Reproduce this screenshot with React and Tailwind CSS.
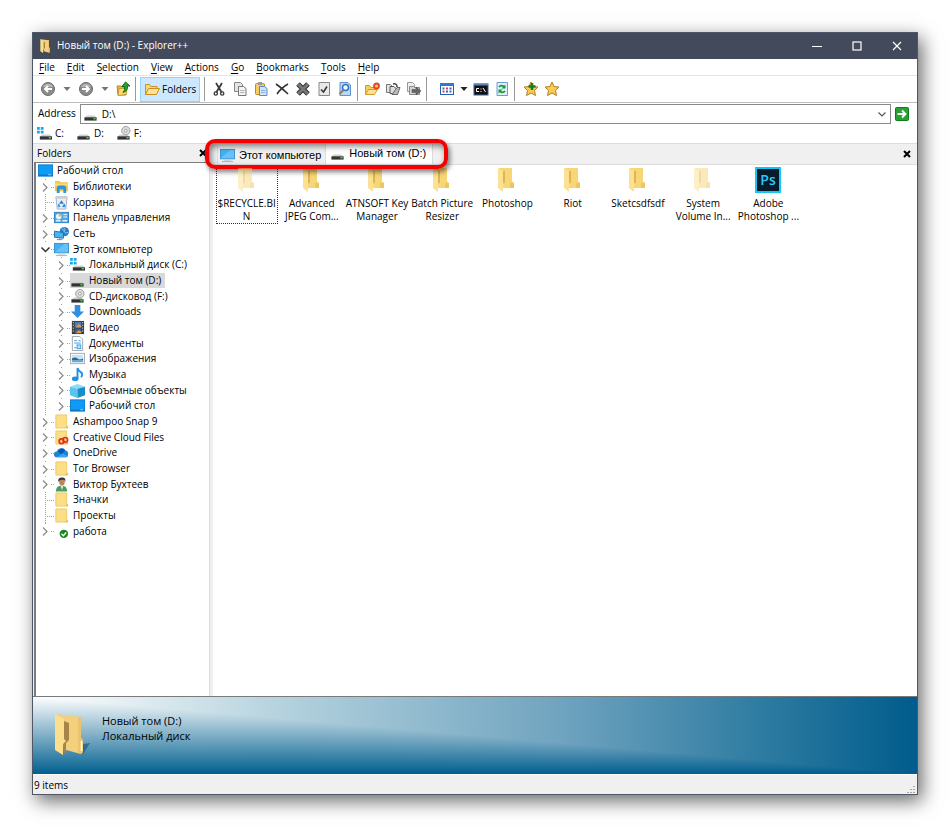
import { useState } from "react";

const Svg = ({ size = "size-4", box = "0 0 16 16", children }) => (
	<svg viewBox={box} className={`${size} shrink-0`} fill="none" aria-hidden="true">
		{children}
	</svg>
);

/* tree and drive icons */

const DesktopIcon = () => (
	<Svg size="size-[15px]">
		<rect x="0.5" y="2" width="15" height="12" fill="#0f9bf5" stroke="#0a7fd0" />
		<path d="M1 13h14" stroke="#0a6dba" />
		<path d="M11 12.5h3" stroke="#9fd8ff" />
	</Svg>
);

const LibraryIcon = () => (
	<Svg size="size-[15px]">
		<path d="M1 2h5l1.500 1.500H15V13H1z" fill="#f5c84b" />
		<path d="M1 5h14v2H1z" fill="#fadb7c" />
		<path d="M3 15V9.500Q3 7 5.500 7h5Q13 7 13 9.500V15h-3v-4H6v4z" fill="#2f95dc" />
	</Svg>
);

const RecycleIcon = () => (
	<Svg size="size-[15px]">
		<path d="M2 2h12l-1.500 13h-9z" fill="#e9eef2" stroke="#a5adb5" />
		<path d="M2 2h12v2H2z" fill="#c9d0d6" />
		<path d="M8 6l2 3H6zM5 9.500l1.500 3H4.500zM11 9.500l1 3H9z" fill="#1f7fd6" stroke="#1f7fd6" strokeWidth="0.600" />
	</Svg>
);

const PanelIcon = () => (
	<Svg size="size-[15px]">
		<rect x="0.500" y="2.500" width="15" height="11" fill="#4aa8e8" stroke="#2b82c4" />
		<circle cx="5" cy="7" r="3" fill="#e9f6ff" />
		<path d="M5 7V4a3 3 0 0 1 3 3z" fill="#f0b43c" />
		<path d="M10 5h4M10 7.500h4" stroke="#fff" />
		<path d="M2 11.500h5M9 11.500h5" stroke="#dff1ff" strokeWidth="1.500" />
	</Svg>
);

const NetworkIcon = () => (
	<Svg size="size-[15px]">
		<circle cx="11" cy="6" r="5" fill="#2a7fc4" />
		<path d="M8 3q3 1 3 3t4 1M10 1q3 3 1 5" stroke="#8cc9ef" />
		<path d="M0.500 5.500L10 7v6L0.500 12z" fill="#4bb3f2" stroke="#1d6faa" />
		<path d="M3 14.500h6M6 13v2" stroke="#6f8799" />
	</Svg>
);

const ComputerIcon = () => (
	<Svg size="size-[15px]">
		<rect x="0.500" y="1.500" width="15" height="10" fill="#44b0f3" stroke="#3b8fc9" />
		<path d="M1 11L11 2h4v9z" fill="#67c2f8" />
		<path d="M2 14.500h12" stroke="#9fb1bf" />
		<path d="M4 13h8" stroke="#b9c7d1" />
	</Svg>
);

const diskBody = (
	<>
		<path d="M4 9h8l2.500 2.500h-13z" fill="#cfcfcf" />
		<path d="M1.500 11h13v3.500h-13z" fill="#333" />
		<path d="M11 12.500h2.500" stroke="#4ecb52" strokeWidth="1.500" />
	</>
);

const DiskIcon = () => <Svg size="size-[15px]">{diskBody}</Svg>;

const SystemDiskIcon = () => (
	<Svg size="size-[15px]">
		<g transform="translate(1.500 0)">{diskBody}</g>
		<path d="M0 1h3v3H0zM4 1h3v3H4zM0 5h3v3H0zM4 5h3v3H4z" fill="#19a8ea" />
	</Svg>
);

const CdIcon = () => (
	<Svg size="size-[15px]">
		{diskBody}
		<circle cx="10.500" cy="5" r="4.500" fill="#dcdcdc" stroke="#9b9b9b" />
		<circle cx="10.500" cy="5" r="1.500" fill="#fff" stroke="#9b9b9b" />
	</Svg>
);

const DownloadIcon = () => (
	<Svg size="size-[15px]">
		<path d="M5 1h6v7h4l-7 7-7-7h4z" fill="#2f8fe0" />
	</Svg>
);

const VideoIcon = () => (
	<Svg size="size-[15px]">
		<rect x="2" y="1" width="13" height="14" fill="#3a3a3a" />
		<path d="M3.500 2v12M13.500 2v12" stroke="#d0d0d0" strokeDasharray="1.500 1.500" />
		<rect x="5" y="2" width="7" height="6" fill="#3f7fc6" />
		<rect x="5" y="9" width="7" height="5" fill="#345f9c" />
		<path d="M6 8l3-4 3 2v2zM6 14l3-3 3 1v2z" fill="#d99a4a" />
	</Svg>
);

const DocIcon = () => (
	<Svg size="size-[15px]">
		<path d="M2.500 0.500h8l3 3v12h-11z" fill="#fff" stroke="#9aa5ae" />
		<path d="M4.500 5h3M4.500 7.500h7M9 5h2.500M4.500 12.500h2" stroke="#3d9be0" />
		<rect x="7.500" y="9.500" width="4" height="4" fill="#bfe0f7" stroke="#3d9be0" />
	</Svg>
);

const PictureIcon = () => (
	<Svg size="size-[15px]">
		<rect x="0.500" y="2.500" width="15" height="11" fill="#fff" stroke="#a9a9a9" />
		<rect x="2" y="4" width="12" height="8" fill="#c5e4f8" />
		<path d="M2 10V8q4-2 6 0t6 0v2z" fill="#2f6690" />
		<path d="M2 10h12v2H2z" fill="#6fa9cf" />
	</Svg>
);

const MusicIcon = () => (
	<Svg size="size-[15px]">
		<ellipse cx="5.500" cy="12.500" rx="3.500" ry="2.500" fill="#1e90e6" />
		<path d="M8 13V1q1 3 3.500 4.500T12 11" stroke="#1e90e6" strokeWidth="2" />
	</Svg>
);

const CubeIcon = () => (
	<Svg size="size-[15px]">
		<path d="M0 4l8-3 8 3-8 2z" fill="#8adcf7" />
		<path d="M0 4l8 2v10l-8-3z" fill="#5ac4ee" />
		<path d="M16 4L8 6v10l8-3z" fill="#168fc8" />
	</Svg>
);

const FolderIcon = ({ children }) => (
	<Svg size="size-[15px]">
		<path d="M2 1h11.500v12h1v2H2z" fill="#fbdf86" stroke="#ecc965" />
		<path d="M13 13.500h2V15h-3z" fill="#e3b84c" />
		{children}
	</Svg>
);

const CloudFolderIcon = () => (
	<FolderIcon>
		<circle cx="8" cy="12" r="2.500" stroke="#e0301e" strokeWidth="1.800" />
		<circle cx="12" cy="10.500" r="2.500" stroke="#e0301e" strokeWidth="1.800" />
	</FolderIcon>
);

const OneDriveIcon = () => (
	<Svg size="size-[15px]">
		<path d="M3 13a3 3 0 0 1 0-6 5 5 0 0 1 9-1.500A4 4 0 0 1 13 13z" fill="#1b84d8" />
		<path d="M4 7a5 5 0 0 1 8-1.500L8 10z" fill="#0f57ad" />
		<path d="M3 13l6-4 6 3q-1 1-2 1z" fill="#35a7ee" />
	</Svg>
);

const UserIcon = () => (
	<Svg size="size-[15px]">
		<path d="M2 15.500Q2 9 8 9t6 6.500z" fill="#4b9a5f" />
		<path d="M7 9h3l-1.500 5z" fill="#e6efe8" />
		<ellipse cx="8.500" cy="5" rx="3" ry="4" fill="#b98560" />
		<path d="M4.500 5Q4 0.500 8.500 0.500T12 5l-1-2H7z" fill="#33302e" />
	</Svg>
);

const CheckIcon = () => (
	<Svg size="size-[15px]">
		<circle cx="10.500" cy="10.500" r="4.500" fill="#15871b" />
		<path d="M8 10.500l2 2 3-3.500" stroke="#fff" strokeWidth="1.500" />
	</Svg>
);

/* standing folder used in the title bar and the details panel */
const OpenFolder = ({ size, shadow }) => (
	<Svg size={size} box="0 0 36 42">
		{shadow && <path d="M22 39l7 2 7-11-7 1z" fill="#174e77" opacity="0.6" />}
		<path d="M1 1l26 3v21l2 2v12l-2 2-15-4z" fill="#f3d07d" />
		<path d="M27 4v21l2 2v12l-2 2-3-1V4z" fill="#ecc36b" />
		<path d="M10 8l5 2v17l-3 3v8l-2 3z" fill="#a88446" />
		<path d="M1 1l9 5v20l2 2-3 3v11L1 37z" fill="#fbdf8c" />
		{shadow && <path d="M27.500 28v10" stroke="#fff" strokeWidth="1.500" />}
	</Svg>
);

const FileFolder = ({ faded }) => (
	<Svg size={faded ? "size-[26px] opacity-50" : "size-[26px]"} box="0 0 26 26">
		<path d="M5 1h13v13l2 2v5H5z" fill="#f7d678" />
		<path d="M9 4h2v11l-2 3z" fill="#e0b450" />
		<path d="M4 1l5 3v12l1 1-1 2v6l-5-4z" fill="#fce193" />
		<path d="M16 16h4v5h-4z" fill="#eec660" />
	</Svg>
);

const PhotoshopIcon = () => (
	<Svg size="size-[26px]" box="0 0 26 26">
		<rect x="1" y="1" width="24" height="24" fill="#071c2b" stroke="#16c5f7" strokeWidth="2" />
		<text x="13" y="18" textAnchor="middle" fontSize="14" fontWeight="600" fontFamily="Open Sans, sans-serif" fill="#2cc9fb">
			Ps
		</text>
	</Svg>
);

/* toolbar icons */

const roundArrow = (d) => (
	<Svg>
		<circle cx="8" cy="8" r="6.500" fill="#8b8b8b" stroke="#6c6c6c" />
		<path d="M3 6a5.500 5.500 0 0 1 10 0z" fill="#b5b5b5" />
		<path d={d} stroke="#fff" strokeWidth="1.800" />
	</Svg>
);
const BackIcon = () => roundArrow("M12 8H5M8 5L5 8l3 3");
const ForwardIcon = () => roundArrow("M4 8h7M8 5l3 3-3 3");
const UpIcon = () => (
	<Svg>
		<path d="M2 5h4l1 1h4v8H3z" fill="#e9b93d" stroke="#b98a1f" />
		<path d="M3 14.500l1-7h8l-1 6z" fill="#fbdc73" stroke="#c99a2f" />
		<path d="M7 5.500L10.500 1 15 5h-2.500q.5 5-4.500 6.500 2.500-2.500 1.500-6z" fill="#22a32a" stroke="#12701a" />
	</Svg>
);
const FoldersIcon = () => (
	<Svg>
		<path d="M1.500 13.500v-10h4l1.500 2h6v2" fill="#f9d877" stroke="#cc8f24" />
		<path d="M1.500 13.500l3-6h11l-3 6z" fill="#fde391" stroke="#cc8f24" />
	</Svg>
);
const CutIcon = () => (
	<Svg>
		<path d="M5 2l5.500 9M11 2L5.500 11" stroke="#3b3b3b" strokeWidth="1.800" />
		<circle cx="4.800" cy="12.500" r="1.600" stroke="#3b3b3b" strokeWidth="1.400" />
		<circle cx="11.200" cy="12.500" r="1.600" stroke="#3b3b3b" strokeWidth="1.400" />
	</Svg>
);
const CopyIcon = () => (
	<Svg>
		<path d="M2.500 1.500h6l2 2v7h-8z" fill="#e4e4e4" stroke="#888" />
		<path d="M6.500 5.500h5l2.500 2v7H6.500z" fill="#f4f4f4" stroke="#777" />
		<path d="M8 9.500h4.500M8 11.500h4.500" stroke="#b5b5b5" />
	</Svg>
);
const PasteIcon = () => (
	<Svg>
		<rect x="2.500" y="2.500" width="9" height="11" rx="1" fill="#f5cd63" stroke="#c08b27" />
		<path d="M5 1h4v3H5z" fill="#9c9c9c" />
		<path d="M6.500 5.500h5l2.500 2v7H6.500z" fill="#cfe3fb" stroke="#5c8bc5" />
		<path d="M8 9.500h4.500M8 11.500h4.500" stroke="#8fb3de" />
	</Svg>
);
const DeleteIcon = () => (
	<Svg>
		<path d="M2 3q6 4 12 10M14 3q-7 4-11 10" stroke="#333" strokeWidth="1.600" />
	</Svg>
);
const ShredIcon = () => (
	<Svg>
		<path d="M3 3l10 10M13 3L3 13" stroke="#333" strokeWidth="5" />
		<path d="M3 3l10 10M13 3L3 13" stroke="#777" strokeWidth="3" />
	</Svg>
);
const PropertiesIcon = () => (
	<Svg>
		<path d="M3 1.500h10.500v13H3z" fill="#e9e9e9" stroke="#888" />
		<path d="M5 8.500l2.500 2.500L11 5.500" stroke="#333" strokeWidth="1.500" />
	</Svg>
);
const SearchIcon = () => (
	<Svg>
		<path d="M3 1.500h8l2.500 2.500v10.500H3z" fill="#bcd6f5" stroke="#5f92cf" />
		<circle cx="8.500" cy="6.500" r="3" fill="#eef8ff" stroke="#2f74c5" strokeWidth="1.500" />
		<path d="M6.500 9L2.500 13" stroke="#9a7a5a" strokeWidth="2" />
	</Svg>
);
const NewFolderIcon = () => (
	<Svg>
		<path d="M1.500 13.500v-9h4l1.500 2h5v2" fill="#f7ce5e" stroke="#cf9a2f" />
		<path d="M1.500 13.500l3-5h9l-3 5z" fill="#fde391" stroke="#cf9a2f" />
		<circle cx="12.500" cy="5" r="2.500" fill="#ffd24a" stroke="#e0452a" strokeWidth="1.800" />
	</Svg>
);
const CopyToIcon = () => (
	<Svg>
		<path d="M1.500 3.500h4l2 2v6h-6z" fill="#e4e4e4" stroke="#777" />
		<path d="M5 5.500h4l2 2v5H5z" fill="#ddd" stroke="#555" />
		<path d="M8 3q4-1 4 3" stroke="#444" strokeWidth="1.500" />
		<path d="M7 13.500h5.500l2.500-7h-3z" fill="#bbb" stroke="#666" />
	</Svg>
);
const MoveToIcon = () => (
	<Svg>
		<path d="M1.500 1.500h5l2 2v7h-7z" fill="#eee" stroke="#999" />
		<path d="M3.500 13.500v-8h4l1 1h5v7z" fill="#d5d5d5" stroke="#888" />
		<path d="M6 8.500h4V6l5 4-5 4v-2.500H6z" fill="#666" stroke="#444" strokeWidth="0.500" />
	</Svg>
);
const ViewsIcon = () => (
	<Svg>
		<rect x="1.500" y="2.500" width="13" height="11" fill="#fff" stroke="#1f5fb0" />
		<path d="M1 2h14v3H1z" fill="#2f78d4" />
		<path d="M3.500 7.500h2M10.500 10.500h2" stroke="#3b6fc0" strokeWidth="2" />
		<path d="M7 7.500h2M3.500 10.500h2" stroke="#d8433a" strokeWidth="2" />
		<path d="M10.500 7.500h2M7 10.500h2" stroke="#3a5fd0" strokeWidth="2" />
	</Svg>
);
const CmdIcon = () => (
	<Svg>
		<rect x="1" y="3" width="14" height="11" fill="#111" stroke="#3e5f91" />
		<path d="M1 3.500h14" stroke="#5f82b8" strokeWidth="2" />
		<path d="M6 7.500H3.500v3H6M8 7.500v1M8 10v1M10 7l2.500 4" stroke="#fff" />
	</Svg>
);
const RefreshIcon = () => (
	<Svg>
		<path d="M3 1.500h10.500v13H3z" fill="#dfefff" stroke="#6a9bd1" />
		<path d="M5 6q2-2.500 5-.5M11 10q-2 2.500-5 .5" stroke="#189a28" strokeWidth="1.800" />
		<path d="M11.500 3.500v4h-4zM4.500 12.500v-4h4z" fill="#189a28" />
	</Svg>
);
const StarIcon = ({ plus }) => (
	<Svg>
		<path d="M8 1l2 4.500 5 .5-3.500 3.500 1 5L8 12l-4.500 2.500 1-5L1 6l5-.5z" fill="#f7cb55" stroke="#b27f22" />
		{plus && <path d="M9 2v7M5.500 5.500h7" stroke="#177d22" strokeWidth="2.500" />}
	</Svg>
);

const ToolButton = ({ label, icon: Icon }) => (
	<button aria-label={label} className="size-4">
		<Icon />
	</button>
);

const Caret = ({ label, dark }) => (
	<button aria-label={label} className="flex w-2 items-center justify-center">
		<Svg size="size-2" box="0 0 8 8">
			<path d="M0.500 2h7L4 6z" fill={dark ? "#222" : "#777"} />
		</Svg>
	</button>
);

const Separator = () => <div className="h-6 w-px bg-[#9a9a9a]" />;

const menus = ["File", "Edit", "Selection", "View", "Actions", "Go", "Bookmarks", "Tools", "Help"];

const editTools = [
	["Cut", CutIcon],
	["Copy", CopyIcon],
	["Paste", PasteIcon],
	["Delete", DeleteIcon],
	["Delete permanently", ShredIcon],
	["Properties", PropertiesIcon],
	["Search", SearchIcon],
];

const folderTools = [
	["New folder", NewFolderIcon],
	["Copy to", CopyToIcon],
	["Move to", MoveToIcon],
];

const drives = [
	["C:", SystemDiskIcon],
	["D:", DiskIcon],
	["F:", CdIcon],
];

const tree = [
	{ name: "Рабочий стол", icon: DesktopIcon, level: 0 },
	{ name: "Библиотеки", icon: LibraryIcon, level: 1, arrow: "closed" },
	{ name: "Корзина", icon: RecycleIcon, level: 1 },
	{ name: "Панель управления", icon: PanelIcon, level: 1, arrow: "closed" },
	{ name: "Сеть", icon: NetworkIcon, level: 1, arrow: "closed" },
	{ name: "Этот компьютер", icon: ComputerIcon, level: 1, arrow: "open" },
	{ name: "Локальный диск (C:)", icon: SystemDiskIcon, level: 2, arrow: "closed" },
	{ name: "Новый том (D:)", icon: DiskIcon, level: 2, arrow: "closed" },
	{ name: "CD-дисковод (F:)", icon: CdIcon, level: 2, arrow: "closed" },
	{ name: "Downloads", icon: DownloadIcon, level: 2, arrow: "closed" },
	{ name: "Видео", icon: VideoIcon, level: 2, arrow: "closed" },
	{ name: "Документы", icon: DocIcon, level: 2, arrow: "closed" },
	{ name: "Изображения", icon: PictureIcon, level: 2, arrow: "closed" },
	{ name: "Музыка", icon: MusicIcon, level: 2, arrow: "closed" },
	{ name: "Объемные объекты", icon: CubeIcon, level: 2, arrow: "closed" },
	{ name: "Рабочий стол", icon: DesktopIcon, level: 2, arrow: "closed" },
	{ name: "Ashampoo Snap 9", icon: FolderIcon, level: 1, arrow: "closed" },
	{ name: "Creative Cloud Files", icon: CloudFolderIcon, level: 1, arrow: "closed" },
	{ name: "OneDrive", icon: OneDriveIcon, level: 1, arrow: "closed" },
	{ name: "Tor Browser", icon: FolderIcon, level: 1, arrow: "closed" },
	{ name: "Виктор Бухтеев", icon: UserIcon, level: 1, arrow: "closed" },
	{ name: "Значки", icon: FolderIcon, level: 1 },
	{ name: "Проекты", icon: FolderIcon, level: 1 },
	{ name: "работа", icon: CheckIcon, level: 1, arrow: "closed" },
];

const files = [
	{ lines: ["$RECYCLE.BI", "N"], faded: true },
	{ lines: ["Advanced", "JPEG Com..."] },
	{ lines: ["ATNSOFT Key", "Manager"] },
	{ lines: ["Batch Picture", "Resizer"] },
	{ lines: ["Photoshop"] },
	{ lines: ["Riot"] },
	{ lines: ["Sketcsdfsdf"] },
	{ lines: ["System", "Volume In..."], faded: true },
	{ lines: ["Adobe", "Photoshop ..."], icon: PhotoshopIcon },
];

const Branch = ({ arrow }) => (
	<svg viewBox="0 0 18 16" className="h-4 w-[18px] shrink-0" fill="none" aria-hidden="true">
		<path d="M9.500 0v16M9 8.500h9" stroke="#a0a0a0" strokeDasharray="1 1" />
		{arrow && <rect x="5" y="2" width="9" height="13" fill="#fff" />}
		{arrow === "closed" && <path d="M7 4.500l4 4-4 4" stroke="#8c8c8c" strokeWidth="1.300" />}
		{arrow === "open" && <path d="M5.500 6.500l4 4 4-4" stroke="#333" strokeWidth="1.500" />}
	</svg>
);

const TreeRow = ({ item, selected, onSelect }) => {
	const Icon = item.icon;
	return (
		<li className="flex items-center">
			{item.level === 0 && <span className="w-0.5" />}
			{item.level === 2 && (
				<svg viewBox="0 0 16 16" className="size-4 shrink-0" aria-hidden="true">
					<path d="M9.500 0v16" stroke="#a0a0a0" strokeDasharray="1 1" />
				</svg>
			)}
			{item.level > 0 && <Branch arrow={item.arrow} />}
			<button
				onClick={onSelect}
				className={`flex h-[15px] items-center gap-1 pr-1 whitespace-nowrap ${selected ? "bg-[#d9d9d9]" : ""}`}
			>
				<Icon />
				{item.name}
			</button>
		</li>
	);
};

const CloseMark = ({ label }) => (
	<button aria-label={label} className="flex size-3 items-center justify-center">
		<Svg size="size-2" box="0 0 8 8">
			<path d="M1 1l6 6M7 1L1 7" stroke="#000" strokeWidth="2" />
		</Svg>
	</button>
);

const App = () => {
	const [selected, setSelected] = useState(7);
	const [address, setAddress] = useState("D:\\");

	return (
		<div className="flex min-h-screen flex-col bg-white p-8 font-['Open_Sans','Noto_Sans',sans-serif] text-[10px] leading-[13px] text-black">
			<div className="flex flex-1 flex-col border border-[#4d5768] bg-white shadow-[4px_6px_18px_rgba(0,0,0,0.6)]">
				<header className="flex h-[26px] items-center bg-[#434a5c] pb-px text-white">
					<div className="flex flex-1 items-center gap-1 pl-1.5">
						<OpenFolder size="size-3.5" />
						<h1>Новый том (D:) - Explorer++</h1>
					</div>
					<div className="flex">
						<button aria-label="Minimize" className="flex w-10 justify-center">
							<Svg size="size-2.5" box="0 0 10 10">
								<path d="M0 5.500h10" stroke="#fff" />
							</Svg>
						</button>
						<button aria-label="Maximize" className="flex w-10 justify-center">
							<Svg size="size-2.5" box="0 0 10 10">
								<rect x="1" y="1" width="8" height="8" stroke="#fff" strokeWidth="1.200" />
							</Svg>
						</button>
						<button aria-label="Close" className="flex w-10 justify-center">
							<Svg size="size-2.5" box="0 0 10 10">
								<path d="M1 1l8 8M9 1L1 9" stroke="#fff" strokeWidth="1.200" />
							</Svg>
						</button>
					</div>
				</header>

				<nav className="flex h-4 items-center gap-3 pl-1.5">
					{menus.map((menu) => (
						<button key={menu}>
							<span className="underline underline-offset-2">{menu[0]}</span>
							{menu.slice(1)}
						</button>
					))}
				</nav>

				<div className="flex h-[27px] items-center border-t border-[#e5e5e5] pl-[7px]">
					<div className="flex items-center gap-[7px]">
						<ToolButton label="Back" icon={BackIcon} />
						<Caret label="Back history" />
						<ToolButton label="Forward" icon={ForwardIcon} />
						<Caret label="Forward history" />
					</div>
					<div className="flex items-center gap-1 pl-1.5">
						<ToolButton label="Up" icon={UpIcon} />
						<Separator />
						<button className="flex h-[25px] items-center gap-0.5 border border-[#99d1ff] bg-[#cce8ff] px-[3px]">
							<FoldersIcon />
							Folders
						</button>
						<Separator />
					</div>
					<div className="flex items-center gap-[5px] pr-1 pl-1.5">
						{editTools.map(([label, icon]) => (
							<ToolButton key={label} label={label} icon={icon} />
						))}
					</div>
					<Separator />
					<div className="flex items-center gap-[5px] pr-1 pl-1.5">
						{folderTools.map(([label, icon]) => (
							<ToolButton key={label} label={label} icon={icon} />
						))}
					</div>
					<Separator />
					<div className="flex items-center gap-[5px] pr-1 pl-3">
						<ToolButton label="Views" icon={ViewsIcon} />
						<Caret label="Choose view" dark />
						<ToolButton label="Command prompt" icon={CmdIcon} />
						<ToolButton label="Refresh" icon={RefreshIcon} />
					</div>
					<Separator />
					<div className="flex items-center gap-[5px] px-2">
						<button aria-label="Add bookmark" className="size-4">
							<StarIcon plus />
						</button>
						<ToolButton label="Bookmarks" icon={StarIcon} />
					</div>
				</div>

				<div className="flex h-[22px] items-stretch border-t border-[#bdbdbd]">
					<label htmlFor="address" className="flex items-center pr-1 pl-[5px]">
						Address
					</label>
					<div className="mt-px flex flex-1 items-center gap-1 border border-[#8a8a8a] pl-0.5">
						<DiskIcon />
						<input
							id="address"
							value={address}
							onChange={(e) => setAddress(e.target.value)}
							className="min-w-0 flex-1 outline-none"
						/>
						<button aria-label="Previous locations" className="px-1">
							<Svg size="size-2" box="0 0 8 8">
								<path d="M0.500 2.500L4 6l3.500-3.500" stroke="#555" strokeWidth="1.200" />
							</Svg>
						</button>
					</div>
					<button aria-label="Go" className="flex w-[26px] items-center pl-1">
						<Svg size="size-3.5" box="0 0 14 14">
							<rect x="0.500" y="0.500" width="13" height="13" rx="1" fill="#2aa233" stroke="#137a1c" />
							<path d="M2.500 7h8M7 3.500L10.500 7 7 10.500" stroke="#fff" strokeWidth="1.800" />
						</Svg>
					</button>
				</div>

				<div className="flex h-[19px] items-center gap-3 pl-1">
					{drives.map(([name, Icon]) => (
						<button key={name} className="flex items-center gap-[3px]">
							<Icon />
							{name}
						</button>
					))}
				</div>

				<main className="flex flex-1 border-t border-[#dcdcdc]">
					<aside className="flex w-[176px] shrink-0 flex-col bg-[#f0f0f0]">
						<div className="flex h-[18px] items-center justify-between pl-1">
							<h2>Folders</h2>
							<CloseMark label="Close folders" />
						</div>
						<div className="ml-px flex-1 border-t border-l-2 border-[#7d7d7d] bg-white">
							<ul className="grid h-[376px] auto-rows-fr">
								{tree.map((item, index) => (
									<TreeRow
										key={index}
										item={item}
										selected={index === selected}
										onSelect={() => setSelected(index)}
									/>
								))}
							</ul>
						</div>
					</aside>
					<div className="w-1 shrink-0 border-l border-[#dcdcdc] bg-[#f0f0f0]" />

					<section className="min-w-0 flex-1">
						<div className="relative flex h-[21px] items-stretch border-b border-[#dcdcdc] bg-[#f0f0f0] font-['Liberation_Sans',sans-serif] text-[11px]">
							<div role="tablist" className="flex flex-1 pl-1">
								<button role="tab" aria-selected="false" className="mt-0.5 flex items-center gap-1 border-l border-[#dcdcdc] pr-1 pl-0.5">
									<ComputerIcon />
									Этот компьютер
								</button>
								<button role="tab" aria-selected="true" className="flex items-center gap-1 border-x border-[#dcdcdc] bg-white pr-1.5 pb-0.5 pl-1">
									<DiskIcon />
									Новый том (D:)
								</button>
							</div>
							<div className="flex items-center pr-1">
								<CloseMark label="Close tab" />
							</div>
							<div className="pointer-events-none absolute -top-[5px] -left-2 h-[30px] w-[243px] rounded-[10px] border-4 border-[#f50000] shadow-[2px_3px_5px_rgba(0,0,0,0.5),inset_2px_3px_6px_rgba(0,0,0,0.5)]" />
						</div>

						<ul className="grid max-w-[588px] grid-cols-9 pt-px pl-px">
							{files.map((file, index) => {
								const Icon = file.icon ?? FileFolder;
								return (
									<li key={file.lines[0]} className="flex justify-center">
										<button
											className={`flex h-[58px] w-[62px] flex-col items-center gap-1 border border-dotted ${
												index === 0 ? "border-[#333]" : "border-transparent"
											}`}
										>
											<Icon faded={file.faded} />
											<span className="flex flex-col whitespace-nowrap">
												{file.lines.map((line) => (
													<span key={line}>{line}</span>
												))}
											</span>
										</button>
									</li>
								);
							})}
						</ul>
					</section>
				</main>

				<section className="flex h-[78px] items-center gap-3 border-t border-[#7a7a7a] bg-[conic-gradient(from_270deg_at_100%_100%,#005f8f_0deg,transparent_5deg),linear-gradient(to_right,#ffffff,#b0cfdc_30%,#6fa3bf_60%,#2f7ca2_82%,#005c8c)] pb-1 pl-[21px]">
					<OpenFolder size="h-[42px] w-9" shadow />
					<div className="flex flex-col gap-0.5 pb-3 text-[11px]">
						<p>Новый том (D:)</p>
						<p>Локальный диск</p>
					</div>
				</section>

				<footer className="flex h-5 items-end justify-between border-t border-white bg-[#f0f0f0] pl-px">
					<span className="pb-0.5">9 items</span>
					<Svg size="size-2.5" box="0 0 10 10">
						<path d="M6 2h2v1H6zM3 5h2v1H3zM6 5h2v1H6zM0 8h2v1H0zM3 8h2v1H3zM6 8h2v1H6z" fill="#a5a5a5" />
					</Svg>
				</footer>
			</div>
		</div>
	);
};

export default App;
